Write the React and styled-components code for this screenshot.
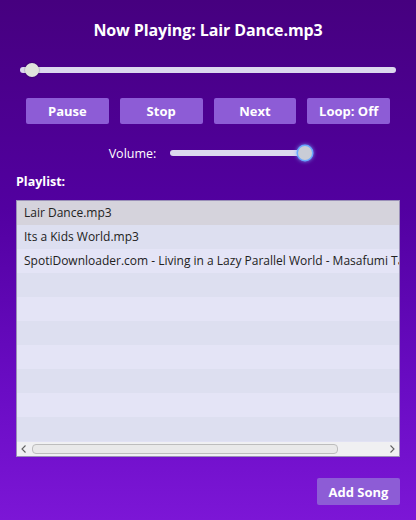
import React from "react";
import styled, { createGlobalStyle } from "styled-components";

const Global = createGlobalStyle`
  html, body { margin: 0; padding: 0; }
  body { font-family: "Open Sans", "Noto Sans", sans-serif; }
`;

const Window = styled.div`
  width: 416px;
  height: 520px;
  box-sizing: border-box;
  background: linear-gradient(180deg, #46007f 0%, #5200a0 40%, #6a0cc4 75%, #7c16d6 100%);
  display: flex;
  flex-direction: column;
  padding: 18px 16px 0 16px;
  color: #fff;
  overflow: hidden;
`;

const Title = styled.h1`
  margin: 0;
  text-align: center;
  font-size: 16px;
  font-weight: 700;
  line-height: 24px;
  letter-spacing: -0.1px;
`;

const SliderTrack = styled.div`
  position: relative;
  height: 6px;
  border-radius: 3px;
  background: #dcd8ee;
  width: ${(p) => p.$width || "auto"};
  margin: ${(p) => p.$margin || "0"};
`;

const Thumb = styled.div`
  position: absolute;
  top: 50%;
  width: 14px;
  height: 14px;
  margin-top: -7px;
  margin-left: -7px;
  border-radius: 50%;
  background: ${(p) => (p.$glow ? "#c9ccd6" : "#dfe3dc")};
  box-shadow: ${(p) =>
    p.$glow ? "0 0 0 1.5px #6aa8ff, 0 0 4px 1px #7bb6ff" : "0 0 1px 1px rgba(0,0,0,0.15)"};
`;

const Buttons = styled.div`
  display: grid;
  grid-template-columns: repeat(4, 1fr);
  column-gap: 11px;
  margin: 25px 10px 0 10px;
`;

const Button = styled.button`
  height: ${(p) => p.$height || "26px"};
  border: none;
  border-radius: 2px;
  background: #8d5cd6;
  color: #fff;
  font-family: inherit;
  font-size: 13px;
  font-weight: 700;
  padding: 0;
  width: ${(p) => p.$width || "auto"};
`;

const VolumeRow = styled.div`
  display: flex;
  align-items: center;
  justify-content: center;
  gap: 14px;
  margin-top: 19px;
  height: 20px;
  padding-left: 4px;
`;

const Label = styled.span`
  font-size: 12.5px;
`;

const PlaylistLabel = styled.div`
  font-size: 12.5px;
  font-weight: 700;
  margin-top: 10px;
  line-height: 18px;
`;

const ListBox = styled.div`
  margin-top: 9px;
  height: 257px;
  border: 1px solid #9a8fb8;
  box-sizing: border-box;
  background: #e2e2f4;
  display: flex;
  flex-direction: column;
  overflow: hidden;
`;

const Rows = styled.div`
  flex: 1;
  overflow: hidden;
`;

const Row = styled.div`
  height: 24px;
  line-height: 24px;
  padding-left: 7px;
  font-size: 12px;
  color: #222;
  white-space: nowrap;
  overflow: hidden;
  background: ${(p) => (p.$selected ? "#d5d3dc" : p.$odd ? "#dddff0" : "#e4e4f6")};
`;

const ScrollBar = styled.div`
  height: 14px;
  flex: none;
  background: #f0f0f2;
  display: flex;
  align-items: center;
  padding: 0 3px;
  gap: 4px;
`;

const Arrow = styled.svg`
  flex: none;
  width: 8px;
  height: 10px;
`;

const ScrollArea = styled.div`
  flex: 1;
  height: 10px;
  display: flex;
`;

const ScrollThumb = styled.div`
  width: 304px;
  height: 8px;
  border: 1px solid #bdbdbd;
  border-radius: 4px;
  background: #e9e9e9;
`;

const Footer = styled.div`
  display: flex;
  justify-content: flex-end;
  margin-top: 21px;
`;

const songs = [
  "Lair Dance.mp3",
  "Its a Kids World.mp3",
  "SpotiDownloader.com - Living in a Lazy Parallel World - Masafumi Takada.mp3",
];

export default function App() {
  const rows = Array.from({ length: 10 }, (_, i) => songs[i] || "");
  return (
    <>
      <Global />
      <Window>
        <Title>Now Playing: Lair Dance.mp3</Title>
        <SliderTrack $margin="25px 4px 0 4px">
          <Thumb style={{ left: "12px" }} />
        </SliderTrack>
        <Buttons>
          <Button>Pause</Button>
          <Button>Stop</Button>
          <Button>Next</Button>
          <Button>Loop: Off</Button>
        </Buttons>
        <VolumeRow>
          <Label>Volume:</Label>
          <SliderTrack $width="141px">
            <Thumb $glow style={{ left: "135px" }} />
          </SliderTrack>
        </VolumeRow>
        <PlaylistLabel>Playlist:</PlaylistLabel>
        <ListBox>
          <Rows>
            {rows.map((s, i) => (
              <Row key={i} $selected={i === 0} $odd={i % 2 === 1}>
                {s}
              </Row>
            ))}
          </Rows>
          <ScrollBar>
            <Arrow viewBox="0 0 8 10">
              <path d="M5.5 1.5 L2 5 L5.5 8.5" fill="none" stroke="#606060" strokeWidth="1.1" />
            </Arrow>
            <ScrollArea>
              <ScrollThumb />
            </ScrollArea>
            <Arrow viewBox="0 0 8 10">
              <path d="M2.5 1.5 L6 5 L2.5 8.5" fill="none" stroke="#606060" strokeWidth="1.1" />
            </Arrow>
          </ScrollBar>
        </ListBox>
        <Footer>
          <Button $width="83px" $height="27px">Add Song</Button>
        </Footer>
      </Window>
    </>
  );
}
